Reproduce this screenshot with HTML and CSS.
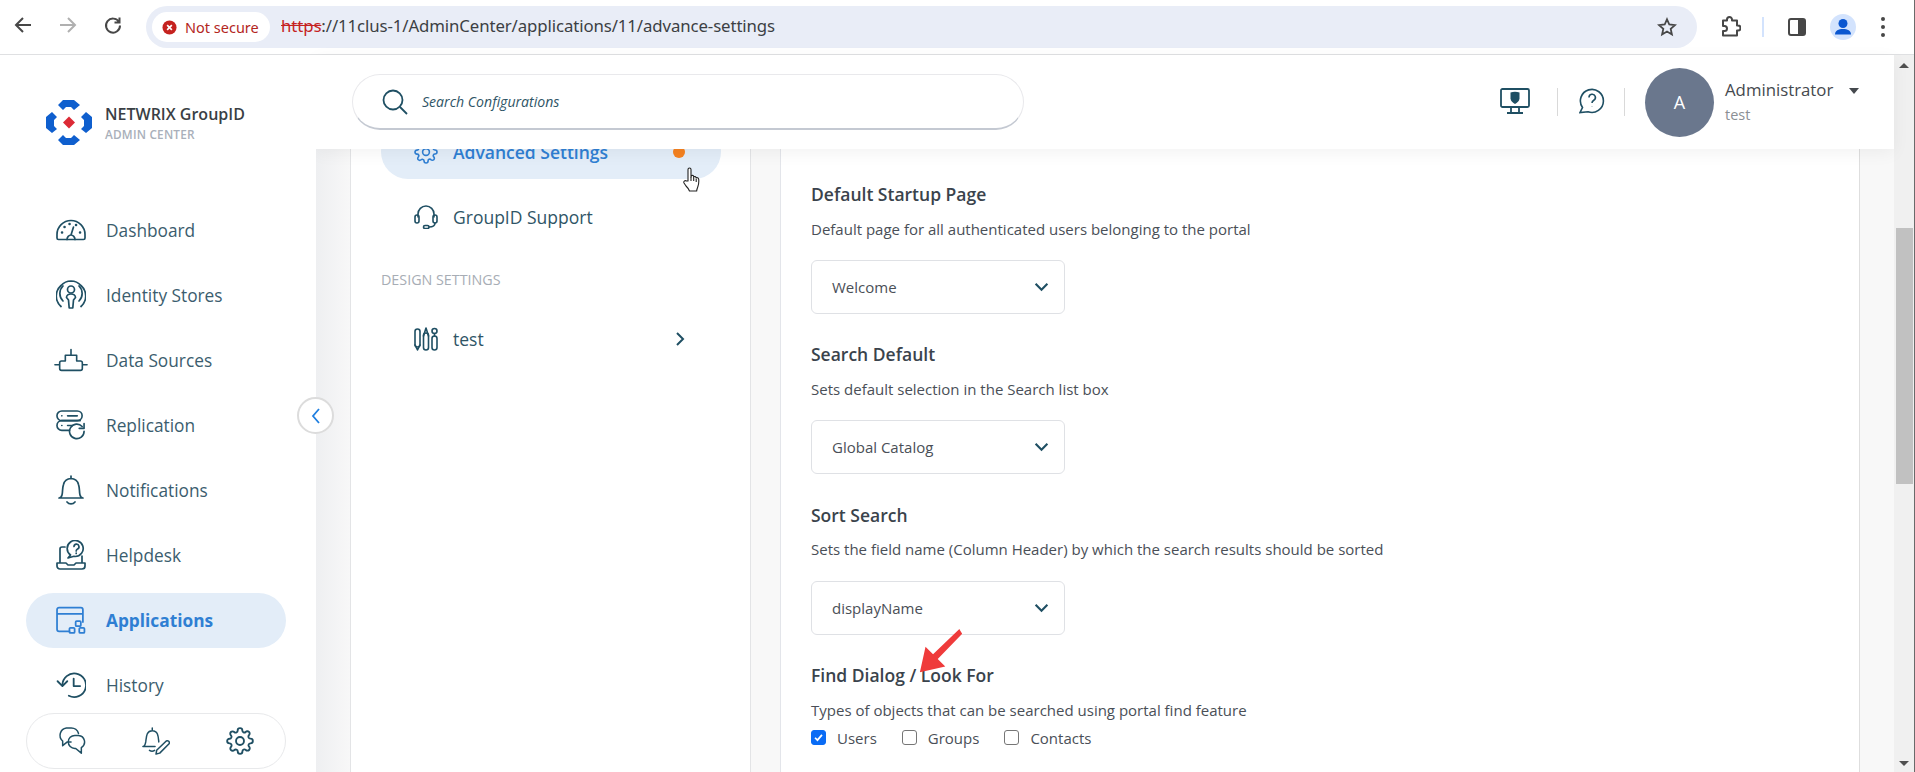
FILE: index.html
```html
<!DOCTYPE html>
<html lang="en">
<head>
<meta charset="utf-8">
<title>Advanced Settings</title>
<link rel="stylesheet" href="styles.css">
</head>
<body>
<svg class="defs" width="0" height="0">
  <symbol id="gear" viewBox="0 0 24 24"><circle cx="12" cy="12" r="3.4"/><path d="M19.4 15a1.65 1.65 0 0 0 .33 1.82l.06.06a2 2 0 0 1 0 2.83 2 2 0 0 1-2.83 0l-.06-.06a1.65 1.65 0 0 0-1.82-.33 1.65 1.65 0 0 0-1 1.51V21a2 2 0 0 1-2 2 2 2 0 0 1-2-2v-.09A1.65 1.65 0 0 0 9 19.4a1.65 1.65 0 0 0-1.82.33l-.06.06a2 2 0 0 1-2.83 0 2 2 0 0 1 0-2.83l.06-.06a1.65 1.65 0 0 0 .33-1.82 1.65 1.65 0 0 0-1.51-1H3a2 2 0 0 1-2-2 2 2 0 0 1 2-2h.09A1.65 1.65 0 0 0 4.6 9a1.65 1.65 0 0 0-.33-1.82l-.06-.06a2 2 0 0 1 0-2.83 2 2 0 0 1 2.83 0l.06.06a1.65 1.65 0 0 0 1.82.33H9a1.65 1.65 0 0 0 1-1.51V3a2 2 0 0 1 2-2 2 2 0 0 1 2 2v.09a1.65 1.65 0 0 0 1 1.51 1.65 1.65 0 0 0 1.82-.33l.06-.06a2 2 0 0 1 2.83 0 2 2 0 0 1 0 2.83l-.06.06a1.65 1.65 0 0 0-.33 1.82V9a1.65 1.65 0 0 0 1.51 1H21a2 2 0 0 1 2 2 2 2 0 0 1-2 2h-.09a1.65 1.65 0 0 0-1.51 1z"/></symbol>
</svg>
<div class="page">
  <header class="browser">
    <div class="tb-left">
      <svg class="tb-icon" viewBox="0 0 20 20"><path d="M18 10H3M10 3 3 10l7 7"/></svg>
      <svg class="tb-icon faded" viewBox="0 0 20 20"><path d="M2 10h15M10 3l7 7-7 7"/></svg>
      <svg class="tb-icon" viewBox="0 0 20 20"><path d="M16 7A7 7 0 1 0 17 10.500M16.500 2.500v5h-5"/></svg>
    </div>
    <div class="omnibox">
      <div class="chip">
        <svg class="chip-icon" viewBox="0 0 16 16"><circle cx="8" cy="8" r="7.500"/><path d="M5.500 5.500l5 5M10.500 5.500l-5 5"/></svg>
        <span>Not secure</span>
      </div>
      <div class="url"><span class="url-scheme">https</span>://11clus-1/AdminCenter/applications/11/advance-settings</div>
      <svg class="star" viewBox="0 0 20 20"><path d="M10 2.300l2.300 5.200 5.700.6-4.300 3.800 1.200 5.600-4.900-2.900-4.900 2.900 1.200-5.600L2 8.100l5.700-.6z"/></svg>
    </div>
    <div class="tb-right">
      <svg class="ext" viewBox="0 0 22 22"><path d="M8 4.500V3.500a2.500 2.500 0 0 1 5 0v1h5v5h1a2.300 2.300 0 0 1 0 5h-1v5H4v-4.500h1.500a2.500 2.500 0 0 0 0-5H4V4.500z"/></svg>
      <span class="tb-sep"></span>
      <span class="side-panel"><span class="side-panel-fill"></span></span>
      <span class="profile">
        <svg viewBox="0 0 26 26"><circle cx="13" cy="9.500" r="4.500"/><path d="M5 20.500c0-4 3.500-5.500 8-5.500s8 1.500 8 5.500z"/></svg>
      </span>
      <span class="kebab"><i></i><i></i><i></i></span>
    </div>
  </header>

  <div class="app">
    <aside class="sidebar">
      <div class="brand">
        <svg class="brand-logo" viewBox="0 0 48 46">
          <g class="logo-blue">
            <path d="M13 5 18 0H29L35 5 29 10 26 7H21L18 10Z"/>
            <path d="M13 40 18 45H29L35 40 29 35 26 38H21L18 35Z"/>
            <path d="M7 12 12 17 9 20V26L12 29 7 33 1 28V17Z"/>
            <path d="M41 12 36 17 39 20V26L36 29 41 33 47 28V17Z"/>
          </g>
          <path class="logo-red" d="M24 16.500 30 22.500 24 28.500 18 22.500Z"/>
        </svg>
        <div class="brand-text">
          <div class="brand-name">NETWRIX GroupID</div>
          <div class="brand-sub">ADMIN CENTER</div>
        </div>
      </div>
      <nav class="side-nav">
        <a class="side-item">
          <span class="side-icon"><svg class="line-icon w30" viewBox="0 0 30 21"><path d="M2.500 20h25a1.500 1.500 0 0 0 1.500-1.500V15A14 14 0 0 0 1 15v3.500A1.500 1.500 0 0 0 2.500 20z"/><path d="M11 20c0-2.500 2-4.500 4-4.500s4 2 4 4.500M15 15.500l2.500-8"/><path class="dots" d="M6 13h.1M8.500 7.500h.1M13.500 4.500h.1M20 5.500h.1M24 13h.1"/></svg></span>
          <span>Dashboard</span>
        </a>
        <a class="side-item">
          <span class="side-icon"><svg class="line-icon w30" viewBox="0 0 30 30"><circle cx="15" cy="9.500" r="3.500"/><path d="M10.500 17.500c0-2 2-3.500 4.500-3.500s4.500 1.500 4.500 3.500l-2 2.500-.7 8h-3.600l-.7-8z"/><path d="M7 21a10.500 10.500 0 0 1 0-15M23 21a10.500 10.500 0 0 0 0-15M5 26.500a14 14 0 0 1 0-21A14 14 0 0 1 15 1a14 14 0 0 1 10 4.500 14 14 0 0 1 0 21"/></svg></span>
          <span>Identity Stores</span>
        </a>
        <a class="side-item">
          <span class="side-icon"><svg class="line-icon w36" viewBox="0 0 36 24"><path d="M18 1v6M1 17h5M30 17h5M12 7h12v6h4a2 2 0 0 1 2 2v6a2 2 0 0 1-2 2H8a2 2 0 0 1-2-2v-6a2 2 0 0 1 2-2h4z"/></svg></span>
          <span>Data Sources</span>
        </a>
        <a class="side-item">
          <span class="side-icon"><svg class="line-icon w30" viewBox="0 0 31 31"><rect x="1" y="1" width="26" height="10" rx="5"/><path d="M6 6h.1M12 6h10"/><path d="M14 21H6a5 5 0 0 1 0-10h19M6 16h.1M12 16h5"/><path d="M29 22a7.500 7.500 0 1 1-2-5M29 14v5h-5"/></svg></span>
          <span>Replication</span>
        </a>
        <a class="side-item">
          <span class="side-icon"><svg class="line-icon w26" viewBox="0 0 26 30"><path d="M13 1v2M1 23c1 0 2.500-1 3-3 1-4 0-6 1.500-10.500A8 8 0 0 1 13 3.500a8 8 0 0 1 7.500 6C22 14 21 16 22 20c.5 2 2 3 3 3zM9 27c2 2.500 6 2.500 8 0"/></svg></span>
          <span>Notifications</span>
        </a>
        <a class="side-item">
          <span class="side-icon"><svg class="line-icon w30" viewBox="0 0 30 30"><path d="M9 7H6a2 2 0 0 0-2 2v13M1 23h9l2 2h6l2-2h9v3a3 3 0 0 1-3 3H4a3 3 0 0 1-3-3zM26 16v6"/><path d="M12 18l2.500-3A8 8 0 1 1 19 16.500a8 8 0 0 1-1-.2z"/><path d="M18 6.500a2.500 2.500 0 1 1 3.500 2.500c-1 .5-1.300 1-1.300 2M20.200 13.200v.3"/></svg></span>
          <span>Helpdesk</span>
        </a>
        <a class="side-item active">
          <span class="side-icon"><svg class="line-icon w30" viewBox="0 0 29 26"><path d="M13 24H3a2 2 0 0 1-2-2V3a2 2 0 0 1 2-2h21a2 2 0 0 1 2 2v12M1 7h25"/><rect x="19" y="14" width="5" height="5" rx="1"/><rect x="13" y="20.500" width="5" height="5" rx="1"/><rect x="22.500" y="20.500" width="5" height="5" rx="1"/></svg></span>
          <span>Applications</span>
        </a>
        <a class="side-item">
          <span class="side-icon"><svg class="line-icon w30" viewBox="0 0 28 24"><path d="M6 12a11 11 0 1 1 6 10M1.500 8.500 6 13l4.500-4.500M16.500 6v7h6"/></svg></span>
          <span>History</span>
        </a>
      </nav>
      <div class="side-footer">
        <svg class="line-icon foot" viewBox="0 0 30 30"><path d="M14 16H10l-5 4v-5A8 8 0 0 1 9 1h5a8 8 0 0 1 8 6"/><path d="M18 9h4a7 7 0 0 1 3 13v6l-6-5h-1a7 7 0 0 1 0-14z"/></svg>
        <svg class="line-icon foot" viewBox="0 0 30 30"><path d="M11 1v2M1 21c2 0 2.500-2 3-5 .7-5 .5-12 7-12s6.500 7 7 12M1 21h13M8 25c1.500 1 4 1 5.500 0"/><path d="M19 28l-4 1 .7-4L26 15a2.200 2.200 0 0 1 3 3z"/></svg>
        <svg class="line-icon foot"><use href="#gear"/></svg>
      </div>
      <button class="collapse" type="button"><svg viewBox="0 0 12 18"><path d="M9 2 3 9l6 7"/></svg></button>
    </aside>

    <main class="main">
      <div class="topbar">
        <div class="search">
          <svg class="search-icon" viewBox="0 0 26 26"><circle cx="11" cy="11" r="9.500"/><path d="M18 18l7 7"/></svg>
          <span>Search Configurations</span>
        </div>
        <div class="top-actions">
          <svg class="monitor" viewBox="0 0 30 26"><rect x="1" y="1" width="28" height="18" rx="1.500"/><path d="M11 19v5M19 19v5M7 25h16"/><path class="shield" d="M10.500 4.500c3-1 6-1 9 0v6c0 2.500-2.500 4.500-4.500 5.500-2-1-4.500-3-4.500-5.500z"/></svg>
          <span class="top-sep"></span>
          <svg class="help" viewBox="0 0 26 26"><path d="M1 24.500l2.500-5A11.500 11.500 0 1 1 9 23.700z"/><path d="M10 9.500a3.200 3.200 0 1 1 4.800 2.700c-1.300.8-1.800 1.500-1.800 2.800M13 18v.3"/></svg>
          <span class="top-sep sep2"></span>
          <div class="avatar">A</div>
          <div class="user">
            <div class="user-name">Administrator<i class="caret"></i></div>
            <div class="user-sub">test</div>
          </div>
        </div>
      </div>
      <div class="workspace">
        <section class="settings-nav">
          <a class="set-item current">
            <svg class="line-icon set-icon"><use href="#gear"/></svg>
            <span>Advanced Settings</span>
            <i class="dot"></i>
          </a>
          <a class="set-item">
            <svg class="line-icon set-icon" viewBox="0 0 24 24"><path d="M4 12V9a8 8 0 0 1 16 0v3"/><rect x="1" y="10" width="4" height="8" rx="2"/><rect x="19" y="10" width="4" height="8" rx="2"/><path d="M21 18c0 3-3 4-6 4"/><rect x="9.500" y="20.500" width="5.500" height="3" rx="1.500"/></svg>
            <span>GroupID Support</span>
          </a>
          <div class="set-label">DESIGN SETTINGS</div>
          <a class="set-item">
            <svg class="line-icon set-icon" viewBox="0 0 24 24"><rect x="1" y="2" width="5" height="18" rx="2.500"/><path d="M1 18l2.500 5L6 18"/><rect x="9.500" y="6" width="5" height="17" rx="2.500"/><path d="M9.500 9 12 1l2.500 8"/><rect x="18" y="9" width="5" height="14" rx="2.500"/><circle cx="20.500" cy="4" r="2.500"/><path d="M20.500 6.500V9"/></svg>
            <span>test</span>
            <svg class="set-chev" viewBox="0 0 10 16"><path d="M2 2l6 6-6 6"/></svg>
          </a>
        </section>
        <section class="settings">
          <div class="field">
            <h3>Default Startup Page</h3>
            <p>Default page for all authenticated users belonging to the portal</p>
            <div class="select"><span>Welcome</span><svg viewBox="0 0 14 9"><path d="M1.500 1.500 7 7l5.500-5.500"/></svg></div>
          </div>
          <div class="field">
            <h3>Search Default</h3>
            <p>Sets default selection in the Search list box</p>
            <div class="select"><span>Global Catalog</span><svg viewBox="0 0 14 9"><path d="M1.500 1.500 7 7l5.500-5.500"/></svg></div>
          </div>
          <div class="field">
            <h3>Sort Search</h3>
            <p>Sets the field name (Column Header) by which the search results should be sorted</p>
            <div class="select"><span>displayName</span><svg viewBox="0 0 14 9"><path d="M1.500 1.500 7 7l5.500-5.500"/></svg></div>
          </div>
          <div class="field">
            <h3>Find Dialog / Look For</h3>
            <p>Types of objects that can be searched using portal find feature</p>
            <div class="checks">
              <label class="check"><span class="box on"><svg viewBox="0 0 15 15"><path d="M3.500 7.800 6.300 10.600 11.500 4.500"/></svg></span>Users</label>
              <label class="check"><span class="box"></span>Groups</label>
              <label class="check"><span class="box"></span>Contacts</label>
            </div>
          </div>
        </section>
      </div>
    </main>
    <div class="scrollbar">
      <i class="arrow-up"></i>
      <div class="thumb"></div>
      <i class="arrow-down"></i>
    </div>
  </div>

  <svg class="red-arrow" viewBox="0 0 50 50"><path d="M45 3 44 1 16 28 8 20 2 47 29 41 21 33 47 6z"/></svg>
  <svg class="hand" viewBox="0 0 18 26"><path d="M5 14V2.500a1.500 1.500 0 0 1 3 0V10l.5-1.500c1.300-.4 2 .2 2.200 1.200 1-.5 2-.2 2.300 1 1-.4 2.500 0 2.700 1.500.3 3-.2 6-1 8-.5 1.500-1 2.300-1 3.800H6.500c-.5-2-2-3.500-3.500-5L1 16c-.8-1.500.8-3 2.500-2z"/><path d="M8 10v4M10.700 10v4M13.200 11.500V15"/></svg>
</div>
</body>
</html>
```
FILE: styles.css
```css
* { box-sizing: border-box; }
html, body { margin: 0; height: 100%; overflow: hidden; }
body { font-family: "Open Sans", "Noto Sans", sans-serif; background: #fff; color: #3a4752; }
.defs { position: absolute; }
.page { position: relative; width: 1915px; height: 772px; border-right: 1px solid #6a6a6a; display: flex; flex-direction: column; overflow: hidden; }

/* browser chrome */
.browser { height: 55px; flex: none; display: flex; align-items: center; background: #fff; border-bottom: 1px solid #dfe0e2; padding-bottom: 4px; }
.tb-left { display: flex; width: 146px; padding-left: 13px; gap: 25px; }
.tb-icon { width: 20px; height: 20px; fill: none; stroke: #474747; stroke-width: 2; }
.tb-icon.faded { stroke: #b0b0b0; }
.omnibox { width: 1551px; height: 42px; margin-top: 4px; background: #e9edf7; border-radius: 21px; display: flex; align-items: center; padding: 0 20px 0 6px; }
.chip { width: 118px; height: 30px; background: #fff; border-radius: 15px; display: flex; align-items: center; gap: 8px; padding-left: 10px; font-size: 14.500px; color: #b3261e; font-family: "Noto Sans", sans-serif; }
.chip-icon { width: 15px; height: 15px; }
.chip-icon circle { fill: #c5221f; }
.chip-icon path { stroke: #fff; stroke-width: 1.800; fill: none; }
.url { margin-left: 11px; margin-bottom: 3px; font-size: 16.800px; color: #3c3f44; font-family: "Noto Sans", sans-serif; letter-spacing: -.1px; }
.url-scheme { color: #c5221f; text-decoration: line-through; }
.star { width: 20px; height: 20px; margin-left: auto; fill: none; stroke: #474747; stroke-width: 1.800; }
.tb-right { flex: 1; display: flex; align-items: center; padding-left: 22px; margin-top: 4px; }
.ext { width: 22px; height: 22px; fill: none; stroke: #474747; stroke-width: 2; stroke-linejoin: round; }
.tb-sep { width: 2px; height: 20px; background: #d3e3fd; margin-left: 21px; }
.side-panel { width: 18px; height: 18px; margin-left: 24px; border: 2px solid #474747; border-radius: 3px; display: flex; justify-content: flex-end; }
.side-panel-fill { width: 6px; background: #474747; }
.profile { width: 26px; height: 26px; margin-left: 24px; border-radius: 50%; background: #d3e3fd; }
.profile svg { display: block; fill: #0b57d0; }
.kebab { margin-left: 25px; display: flex; flex-direction: column; gap: 4px; }
.kebab i { width: 4px; height: 4px; border-radius: 50%; background: #474747; }

/* app */
.app { flex: 1; min-height: 0; display: flex; }
.sidebar { position: relative; flex: none; width: 316px; background: #fff; padding-top: 45px; z-index: 3; }
.brand { height: 46px; display: flex; align-items: center; padding-left: 45px; gap: 12px; }
.brand-logo { width: 48px; height: 46px; flex: none; }
.logo-blue { fill: #0f5fce; }
.logo-red { fill: #dc2a35; }
.brand-name { font-size: 16px; font-weight: 600; color: #3a3f45; line-height: 20px; }
.brand-sub { font-size: 11.800px; font-weight: 600; color: #a9b0ba; line-height: 18px; margin-top: 1px; letter-spacing: .2px; }
.side-nav { margin: 56.500px 30px 0 26px; display: flex; flex-direction: column; gap: 10px; }
.side-item { height: 55px; display: flex; align-items: center; padding-left: 28px; gap: 18px; border-radius: 28px; font-size: 17.300px; color: #3b5d6e; }
.side-icon { width: 34px; display: flex; justify-content: center; flex: none; }
.line-icon { fill: none; stroke: #1f4f63; stroke-width: 1.700; stroke-linecap: round; stroke-linejoin: round; display: block; }
.w30 { width: 30px; height: 30px; }
.w36 { width: 36px; height: 24px; }
.w26 { width: 26px; height: 30px; }
.dots { stroke-width: 2.500; }
.side-item.active { background: #e3edf8; color: #2f7fd3; font-weight: 700; }
.side-item.active .line-icon { stroke: #2f7fd3; }
.side-footer { margin-left: 26px; width: 260px; height: 56px; border: 1px solid #e8e9eb; border-radius: 28px; display: flex; align-items: center; justify-content: space-between; padding: 0 31px; }
.foot { width: 28px; height: 28px; stroke-width: 1.600; }
.collapse { position: absolute; left: 297px; top: 342px; width: 37px; height: 37px; padding: 0; border-radius: 50%; border: 2px solid #dcdcdc; background: #fff; display: flex; align-items: center; justify-content: center; }
.collapse svg { width: 12px; height: 18px; fill: none; stroke: #1f7fe0; stroke-width: 1.800; }

/* main */
.main { flex: 1; min-width: 0; display: flex; flex-direction: column; }
.topbar { position: relative; z-index: 2; flex: none; height: 94px; background: #fff; box-shadow: 0 4px 16px rgba(0,0,0,.05); display: flex; align-items: center; padding-left: 36px; }
.search { width: 672px; height: 56px; border: 1px solid #e9e9ec; border-bottom: 2px solid #c4c9d2; border-radius: 28px; display: flex; align-items: center; padding-left: 29px; gap: 14px; font-size: 14.100px; font-style: italic; color: #2f5566; }
.search-icon { width: 26px; height: 26px; fill: none; stroke: #1f4f63; stroke-width: 1.800; }
.top-actions { margin-left: auto; display: flex; align-items: center; width: 395px; }
.monitor { width: 30px; height: 26px; fill: none; stroke: #1f4f63; stroke-width: 1.800; margin: 0 0 2px 1px; }
.shield { fill: #1f4f63; stroke: none; }
.top-sep { width: 1px; height: 28px; background: #d9d9d9; margin: 0 21px 0 27px; }
.help { width: 26px; height: 26px; fill: none; stroke: #1f4f63; stroke-width: 1.600; margin-bottom: 2px; }
.sep2 { margin: 0 20px 0 19px; }
.avatar { width: 69px; height: 69px; border-radius: 50%; background: #6a778d; color: #fff; font-size: 18px; display: flex; align-items: center; justify-content: center; flex: none; }
.user { margin-left: 11px; }
.user-name { font-size: 16.800px; line-height: 22px; color: #45494e; display: flex; align-items: center; margin-top: -1px; }
.caret { width: 0; height: 0; border-left: 5px solid transparent; border-right: 5px solid transparent; border-top: 6px solid #45494e; margin: 2px 0 0 16px; }
.user-sub { font-size: 14.500px; color: #8b8f94; line-height: 20px; margin-top: 4px; }

.workspace { flex: 1; min-height: 0; overflow: hidden; display: flex; background: linear-gradient(90deg, #eeeff1 0, #f8f8f8 35px); padding: 0 34px; gap: 29px; }
.settings-nav { width: 401px; flex: none; background: #fff; border-left: 1px solid #e3e4e6; border-right: 1px solid #e3e4e6; padding: 0 29px 0 30px; }
.set-item { height: 54px; display: flex; align-items: center; padding-left: 33px; gap: 15px; font-size: 17.500px; color: #2f5566; border-radius: 27px; margin-top: 11px; padding-right: 36px; }
.set-item.current { margin-top: -24px; background: #e3edf8; color: #2f7fd3; font-weight: 600; }
.set-item.current .line-icon { stroke: #2f7fd3; }
.set-icon { width: 24px; height: 24px; flex: none; stroke-width: 1.600; }
.dot { width: 12px; height: 12px; border-radius: 50%; background: #f58220; margin-left: auto; }
.set-label { margin-top: 26px; margin-bottom: 22px; line-height: 20px; font-size: 14.300px; color: #a7adb5; }
.set-chev { width: 10px; height: 16px; margin-left: auto; fill: none; stroke: #1f4f63; stroke-width: 2; }
.settings { flex: 1; min-width: 0; background: #fff; border-left: 1px solid #e3e5ea; border-right: 1px solid #dedede; padding: 33px 30px 0; }
.field + .field { margin-top: 28.400px; }
.field h3 { margin: 0; font-size: 17.500px; line-height: 24px; font-weight: 600; color: #3a434c; }
.field p { margin: 12.500px 0 0; font-size: 15px; line-height: 20px; color: #4a4f57; }
.select { width: 254px; height: 54px; margin-top: 21.500px; border: 1px solid #dfe1e5; border-radius: 6px; display: flex; align-items: center; justify-content: space-between; padding: 0 15px 0 20px; font-size: 15px; color: #4a4f57; }
.select svg { width: 15px; height: 10px; fill: none; stroke: #1f4f63; stroke-width: 2; }
.checks { display: flex; gap: 25px; margin-top: 8px; height: 20px; align-items: center; font-size: 15px; color: #4a4f57; }
.check { display: flex; align-items: center; gap: 11px; }
.box { width: 15px; height: 15px; border: 1px solid #767676; border-radius: 3px; background: #fff; display: block; }
.box.on { background: #0a6cf5; border-color: #0a6cf5; }
.box.on svg { display: block; width: 13px; height: 13px; fill: none; stroke: #fff; stroke-width: 2; }

.scrollbar { flex: none; width: 20px; background: #f0f0f0; display: flex; flex-direction: column; align-items: center; padding: 8px 0 6px; }
.arrow-up { border-left: 5px solid transparent; border-right: 5px solid transparent; border-bottom: 5px solid #505050; }
.arrow-down { border-left: 5px solid transparent; border-right: 5px solid transparent; border-top: 5px solid #505050; margin-top: auto; }
.thumb { width: 17px; height: 256px; margin-top: 160px; background: #c1c1c1; }

/* overlays */
.red-arrow { position: absolute; left: 918px; top: 628px; width: 47px; height: 47px; fill: #ef3b3b; z-index: 5; }
.hand { position: absolute; left: 683px; top: 167px; width: 18px; height: 26px; fill: #fff; stroke: #222; stroke-width: 1.100; stroke-linejoin: round; z-index: 5; }
```
